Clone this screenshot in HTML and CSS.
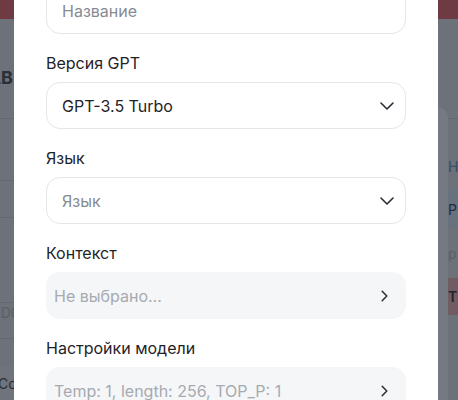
FILE: index.html
```html
<!DOCTYPE html>
<html lang="ru">
<head>
<meta charset="utf-8">
<link rel="stylesheet" href="styles.css">
</head>
<body>
<div class="page">
  <div class="topbar"></div>
  <div class="main">
    <div class="left">
      <div class="l-head"><span>НАЗВАНИЕ ТАБЛИЦЫ АВ</span></div>
      <div class="l-row r1"></div>
      <div class="l-row r2"></div>
      <div class="l-row r3"></div>
      <div class="l-row r4"><span>ID6</span></div>
      <div class="l-row r5"></div>
      <div class="l-foot"><span>Co</span></div>
    </div>
    <div class="center"></div>
    <div class="right">
      <div class="rail"></div>
      <div class="rtable">
        <div class="rt-head"></div>
        <div class="rt-label">НЕ</div>
        <div class="rt-row blue">Р|</div>
        <div class="rt-row plain">р</div>
        <div class="rt-row red">ТИ</div>
      </div>
    </div>
  </div>
</div>

<div class="modal">
  <div class="field">
    <div class="label">Название</div>
    <div class="box bordered"><span class="ph">Название</span></div>
  </div>
  <div class="field">
    <div class="label">Версия GPT</div>
    <div class="box bordered">
      <span class="val">GPT-3.5 Turbo</span>
      <svg class="chev-down" width="14" height="8" viewBox="0 0 14 8"><path d="M1 1l6 6 6-6" fill="none" stroke="#2a2e35" stroke-width="1.6" stroke-linecap="round" stroke-linejoin="round"/></svg>
    </div>
  </div>
  <div class="field">
    <div class="label">Язык</div>
    <div class="box bordered">
      <span class="ph">Язык</span>
      <svg class="chev-down" width="14" height="8" viewBox="0 0 14 8"><path d="M1 1l6 6 6-6" fill="none" stroke="#2a2e35" stroke-width="1.6" stroke-linecap="round" stroke-linejoin="round"/></svg>
    </div>
  </div>
  <div class="field">
    <div class="label">Контекст</div>
    <div class="box filled">
      <span class="ph2">Не выбрано...</span>
      <svg class="chev-right" width="7" height="12" viewBox="0 0 7 12"><path d="M1.2 1.2l4.6 4.8-4.6 4.8" fill="none" stroke="#2a2e35" stroke-width="1.5" stroke-linecap="round" stroke-linejoin="round"/></svg>
    </div>
  </div>
  <div class="field">
    <div class="label">Настройки модели</div>
    <div class="box filled">
      <span class="ph2">Temp: 1, length: 256, TOP_P: 1</span>
      <svg class="chev-right" width="7" height="12" viewBox="0 0 7 12"><path d="M1.2 1.2l4.6 4.8-4.6 4.8" fill="none" stroke="#2a2e35" stroke-width="1.5" stroke-linecap="round" stroke-linejoin="round"/></svg>
    </div>
  </div>
</div>
</body>
</html>
```

FILE: styles.css
```css
html, body {
  margin: 0;
  padding: 0;
}
body {
  width: 458px;
  height: 400px;
  overflow: hidden;
  position: relative;
  background: #6c717a;
  font-family: Inter, "Noto Sans", sans-serif;
}
.page {
  display: flex;
  flex-direction: column;
  height: 400px;
}
.topbar {
  height: 19px;
  background: #6e3a43;
  flex: none;
}
.main {
  flex: 1;
  display: flex;
}
.left {
  width: 14px;
  display: flex;
  flex-direction: column;
  overflow: hidden;
}
.left > div {
  box-sizing: border-box;
  display: flex;
  justify-content: flex-end;
  white-space: nowrap;
}
.l-head {
  height: 100px;
  border-bottom: 1px solid #63686f;
  align-items: center;
  padding-top: 18px;
  padding-right: 1px;
  font-weight: 700;
  font-size: 18px;
  color: #2a2f36;
}
.l-row {
  border-bottom: 1px solid #63686f;
}
.r1 { height: 62px; }
.r2 { height: 37px; }
.r3 { height: 85px; }
.r4 {
  height: 36px;
  font-size: 14px;
  color: #5b6068;
  align-items: flex-start;
  padding-top: 1px;
  justify-content: flex-start !important;
}
.r4 span { margin-left: -3px; }
.r5 { height: 27px; border-bottom: none; }
.l-foot {
  flex: 1;
  background: #6e737c;
  justify-content: flex-start !important;
  align-items: center;
  font-size: 14px;
  color: #2b3036;
}
.l-foot span { margin-left: -2px; }
.center { flex: 1; }
.right {
  width: 20px;
  display: flex;
}
.rail {
  width: 10px;
  margin-top: 88px;
  background: #757a82;
  border-top-right-radius: 10px;
}
.rtable {
  width: 10px;
  overflow: hidden;
  display: flex;
  flex-direction: column;
  font-size: 14px;
  white-space: nowrap;
}
.rt-head {
  height: 100px;
  box-sizing: border-box;
  border-bottom: 1px solid #63686f;
  flex: none;
}
.rt-label {
  height: 71px;
  box-sizing: border-box;
  padding-top: 40px;
  line-height: 16px;
  color: #3c5068;
  font-weight: 500;
}
.rt-row {
  display: flex;
  align-items: center;
}
.rt-row.blue {
  height: 38px;
  background: #68717e;
  color: #1f2b3e;
}
.rt-row.plain {
  height: 50px;
  color: #5b6068;
}
.rt-row.red {
  height: 37px;
  background: #715c63;
  color: #22262c;
  font-weight: 600;
}

.modal {
  position: absolute;
  left: 14px;
  top: -75px;
  width: 424px;
  height: 520px;
  box-sizing: border-box;
  background: #ffffff;
  padding: 32px;
  display: flex;
  flex-direction: column;
  gap: 18px;
}
.field {
  display: flex;
  flex-direction: column;
  gap: 8px;
}
.label {
  font-size: 16px;
  line-height: 22px;
  color: #1f2328;
}
.box {
  height: 47px;
  box-sizing: border-box;
  border-radius: 14px;
  display: flex;
  align-items: center;
  justify-content: space-between;
  font-size: 16px;
}
.box.bordered {
  border: 1px solid #e4e6ea;
  padding: 0 11px 0 15px;
}
.box.filled {
  background: #f5f6f8;
  padding: 0 18px 0 8px;
}
.ph { color: #878b93; }
.val { color: #1f2328; }
.ph2 { color: #a6aab1; }
.chev-down, .chev-right { flex: none; display: block; }
```
